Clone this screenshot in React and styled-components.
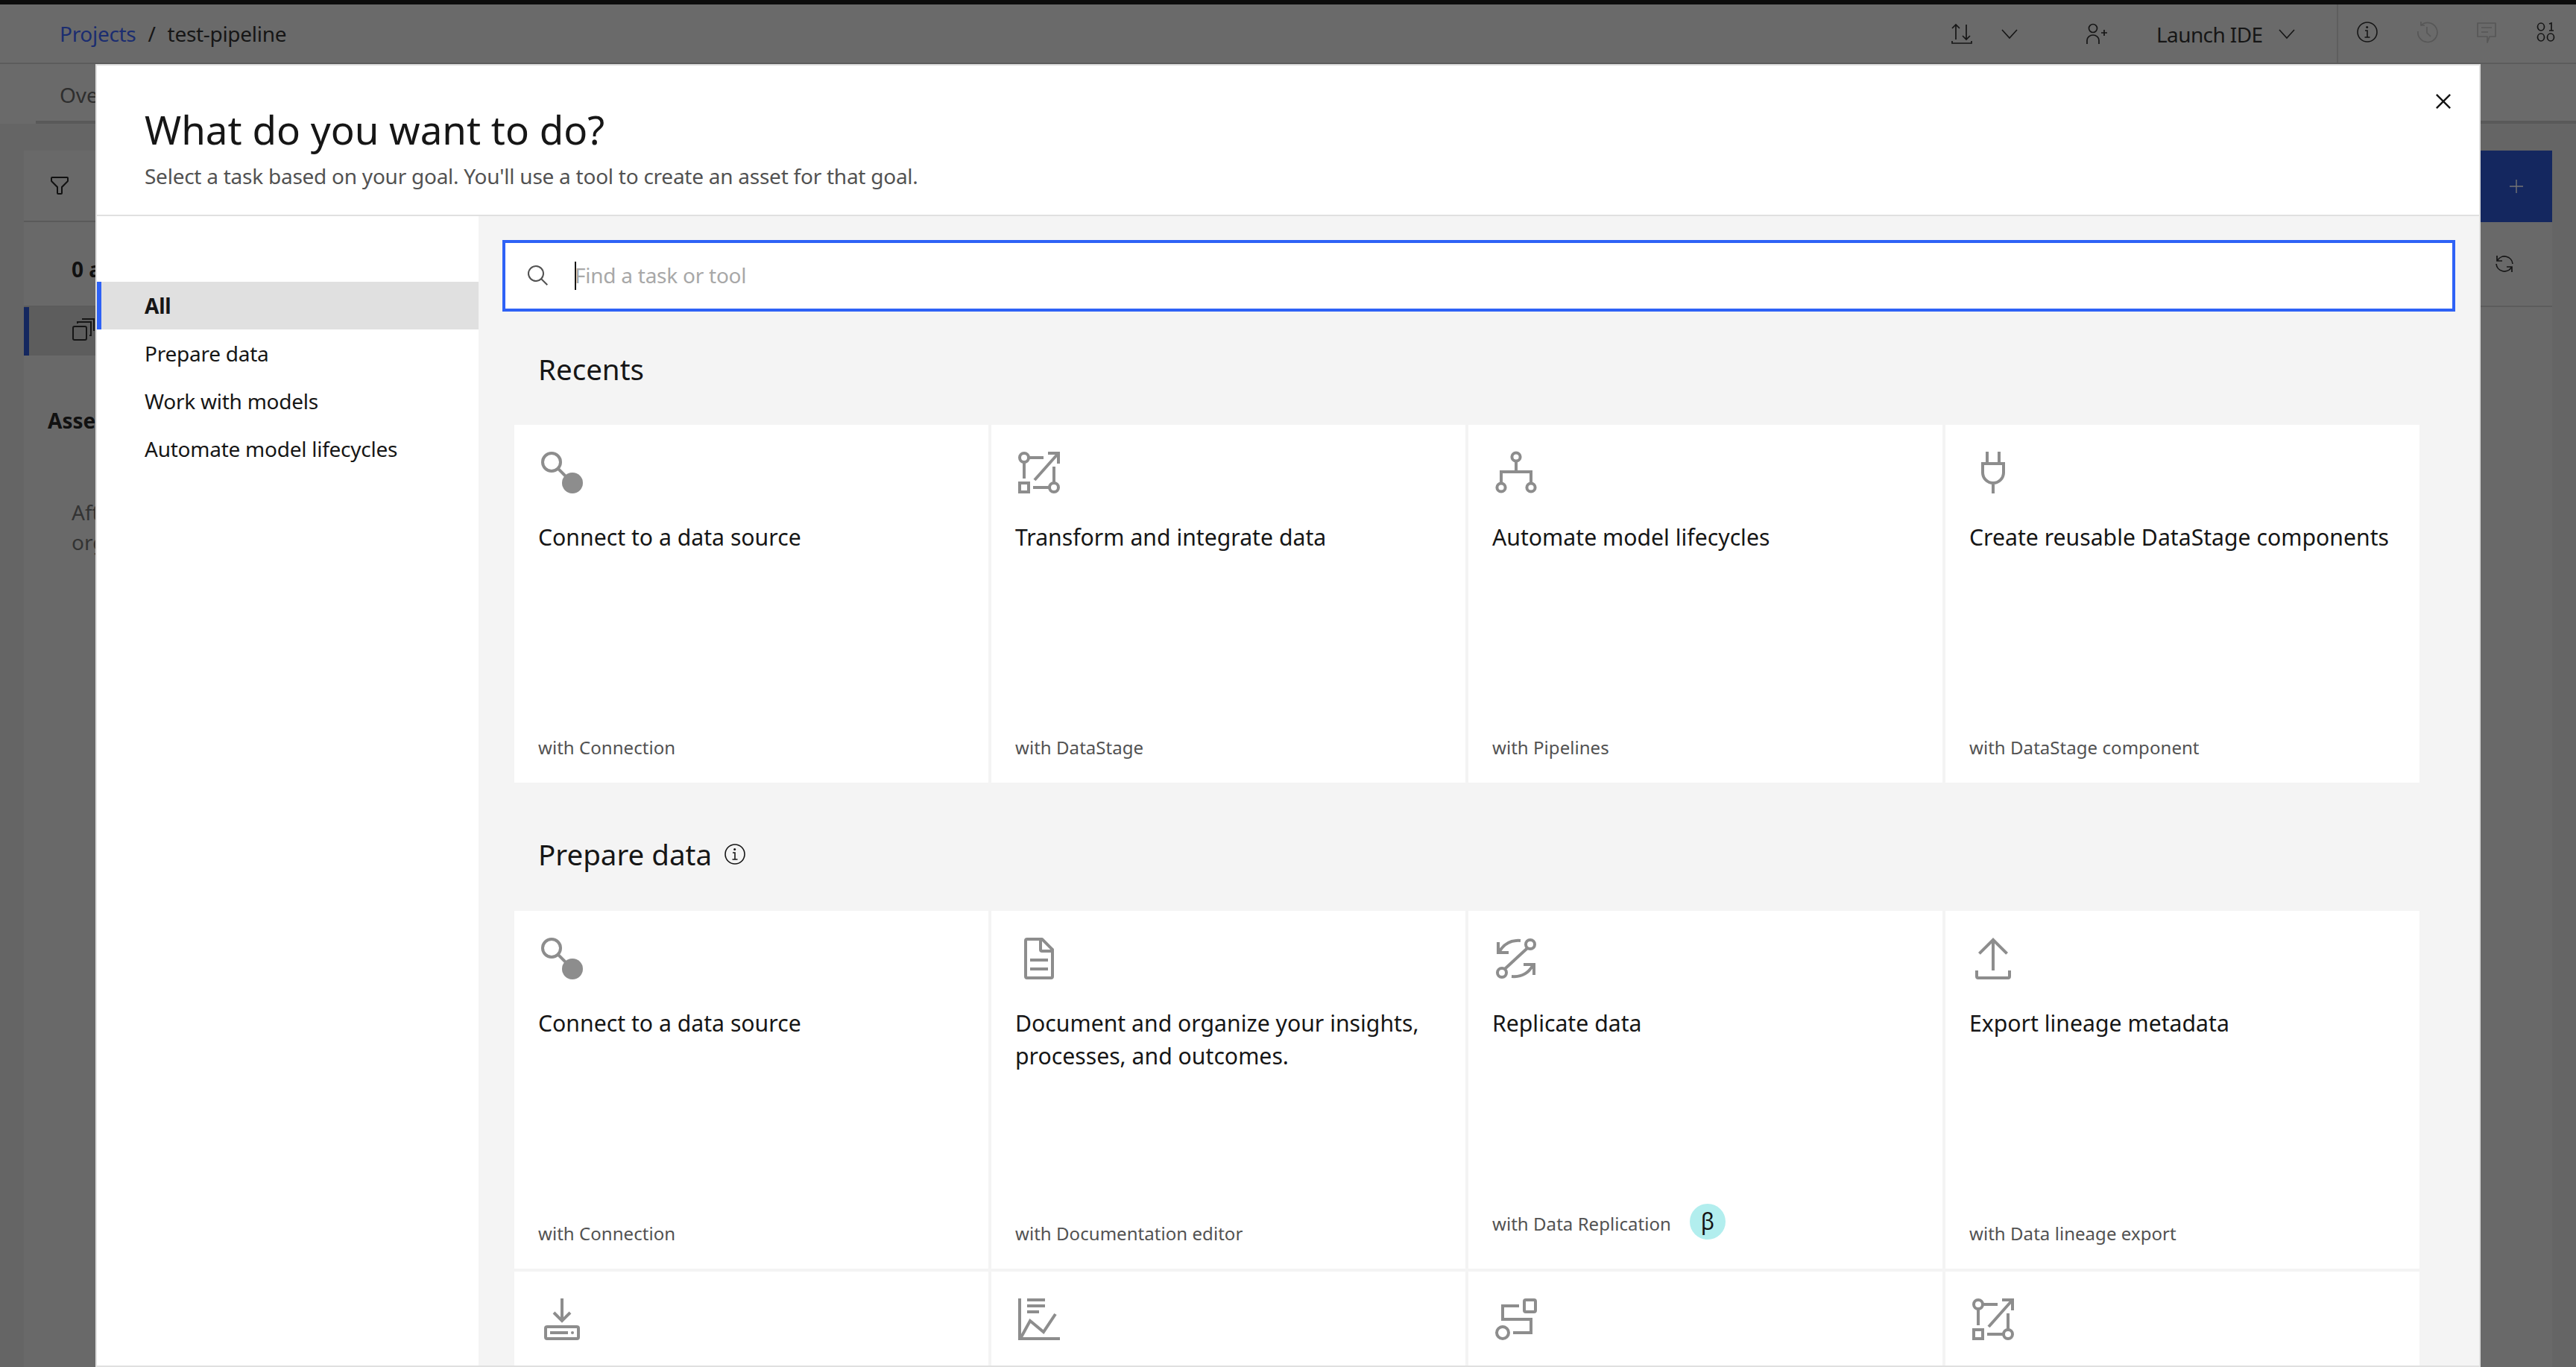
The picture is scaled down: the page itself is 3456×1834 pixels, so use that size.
import React from "react";
import styled, { createGlobalStyle } from "styled-components";

const FONT = `"Noto Sans", "Open Sans", sans-serif`;

const Global = createGlobalStyle`
  html, body { margin: 0; padding: 0; background: #666666; }
  body { font-family: ${FONT}; }
  * { box-sizing: border-box; }
`;

const Page = styled.div`
  position: relative;
  width: 3456px;
  height: 1834px;
  overflow: hidden;
  background: #656565;
  font-family: ${FONT};
`;
const TopStrip = styled.div`height: 6px; background: #0c0c0c;`;
const AppHeader = styled.header`
  display: flex;
  align-items: center;
  height: 80px;
  padding-left: 80px;
  background: #6a6a6a;
  border-bottom: 2px solid #5c5c5c;
`;
const Crumb = styled.span`
  font-size: 28px;
  letter-spacing: ${p => p.$sp || "-0.3px"};
  color: ${p => p.$color || "#161616"};
  margin-right: ${p => p.$mr || 0}px;
`;
const HeaderRight = styled.div`
  margin-left: auto;
  display: flex;
  align-items: center;
  height: 100%;
  padding-right: 25px;
`;
const Slot = styled.div`
  display: flex;
  margin-left: ${p => p.$ml || 0}px;
  margin-top: ${p => p.$mt || 0}px;
`;
const LaunchLabel = styled.span`
  width: 142px;
  margin-left: 64px;
  margin-top: 2px;
  white-space: nowrap;
  font-size: 28px;
  letter-spacing: -0.6px;
  color: #161616;
`;
const VLine = styled.div`
  width: 2px;
  height: 100%;
  margin-left: 51px;
  background: #5e5e5e;
`;
const TabBar = styled.div`
  height: 80px;
  padding-left: 48px;
  background: #6a6a6a;
`;
const Tab = styled.div`
  height: 80px;
  padding: 22px 0 0 32px;
  border-bottom: 4px solid #595959;
  font-size: 28px;
  color: #2e2e2e;
`;
const Panel = styled.section`
  margin: 36px 32px 0;
  height: 1632px;
  background: #696969;
`;
const Toolbar = styled.div`
  display: flex;
  justify-content: space-between;
  height: 96px;
  border-bottom: 2px solid #5a5a5a;
`;
const FilterBox = styled.div`
  display: flex;
  align-items: center;
  padding-left: 32px;
`;
const PrimaryButton = styled.button`
  display: flex;
  align-items: center;
  justify-content: center;
  width: 96px;
  height: 96px;
  padding: 0;
  border: 0;
  background: #14275f;
`;
const CountRow = styled.div`
  display: flex;
  justify-content: space-between;
  align-items: center;
  height: 114px;
  padding: 0 48px 0 64px;
  border-bottom: 2px solid #5c5c5c;
  font-size: 28px;
  font-weight: 700;
  color: #111;
`;
const CountLabel = styled.span`margin-top: 14px;`;
const AssetRow = styled.div`
  display: flex;
  align-items: center;
  width: 300px;
  height: 65px;
  padding: 0 0 6px 57px;
  background: #5d5d5d;
  border-left: 7px solid #14275f;
`;
const AssetHeading = styled.h3`
  margin: 63px 0 0 32px;
  font-size: 28px;
  line-height: 48px;
  font-weight: 700;
  color: #111;
`;
const AssetText = styled.p`
  margin: 79px 0 0 64px;
  font-size: 28px;
  line-height: 40px;
  color: #333;
`;

const Modal = styled.div`
  position: absolute;
  left: 128px;
  top: 86px;
  width: 3200px;
  height: 1748px;
  display: flex;
  flex-direction: column;
  overflow: hidden;
  background: #fff;
  border: 2px solid #e0e0e0;
`;
const ModalHeader = styled.div`
  flex: none;
  display: flex;
  justify-content: space-between;
  height: 202px;
  padding: 49px 28px 0 64px;
  border-bottom: 2px solid #e0e0e0;
`;
const Title = styled.h1`
  margin: 0;
  font-size: 52.9px;
  line-height: 72px;
  font-weight: 400;
  color: #161616;
  letter-spacing: 0;
`;
const Subtitle = styled.p`
  margin: 7px 0 0;
  font-size: 28px;
  line-height: 40px;
  color: #525252;
  letter-spacing: -0.25px;
`;
const CloseButton = styled.button`
  display: flex;
  align-self: flex-start;
  margin-top: -21px;
  padding: 0;
  border: 0;
  background: none;
`;
const ModalBody = styled.div`
  flex: 1;
  display: flex;
  min-height: 0;
`;
const Sidebar = styled.nav`
  flex: none;
  width: 512px;
  padding-top: 88px;
  background: #fff;
`;
const NavItem = styled.div`
  display: flex;
  align-items: center;
  height: 64px;
  padding-left: ${p => (p.$active ? 58 : 64)}px;
  font-size: 28px;
  letter-spacing: -0.25px;
  color: #161616;
  font-weight: ${p => (p.$active ? 700 : 400)};
  background: ${p => (p.$active ? "#e0e0e0" : "transparent")};
  border-left: ${p => (p.$active ? "6px solid #2e62f6" : "0")};
`;
const Content = styled.main`
  flex: 1;
  min-width: 0;
  padding: 32px 32px 0 32px;
  background: #f4f4f4;
`;
const SearchField = styled.div`
  display: flex;
  align-items: center;
  height: 96px;
  padding-left: 28px;
  background: #fff;
  border: 4px solid #2e62f6;
`;
const Caret = styled.span`
  flex: none;
  width: 2px;
  height: 38px;
  margin: 0 -2px 0 33px;
  background: #161616;
`;
const SearchInput = styled.input`
  flex: 1;
  padding: 0 0 2px;
  border: 0;
  outline: 0;
  background: none;
  font-family: ${FONT};
  font-size: 28px;
  letter-spacing: -0.25px;
  color: #161616;
  &::placeholder { color: #a8a8a8; opacity: 1; }
`;
const SectionHeading = styled.h2`
  display: flex;
  align-items: center;
  gap: 15px;
  margin: ${p => p.$top}px 0 ${p => p.$bottom}px 48px;
  font-size: 38.5px;
  line-height: 56px;
  font-weight: 400;
  color: #161616;
`;
const CardGrid = styled.div`
  display: grid;
  grid-template-columns: repeat(4, 636px);
  grid-auto-rows: 480px;
  gap: 4px;
  margin-left: 16px;
`;
const CardBox = styled.article`
  display: flex;
  flex-direction: column;
  padding: 32px 32px 31px;
  background: #fff;
`;
const CardTitle = styled.h3`
  margin: 33px 0 0;
  font-size: 30.2px;
  line-height: 44px;
  font-weight: 400;
  color: #161616;
`;
const CardMeta = styled.div`
  display: flex;
  align-items: center;
  gap: 25px;
  margin-top: auto;
  margin-bottom: ${p => (p.$beta ? 8 : 0)}px;
  font-size: 24px;
  line-height: 32px;
  color: #525252;
  letter-spacing: 0.05px;
`;
const BetaBadge = styled.span`
  display: flex;
  align-items: center;
  justify-content: center;
  width: 48px;
  height: 48px;
  margin-top: -6px;
  border-radius: 50%;
  background: #b2eeee;
  color: #161616;
  font-size: 30px;
  line-height: 1;
`;

const Svg = styled.svg.attrs({ viewBox: "0 0 32 32", xmlns: "http://www.w3.org/2000/svg" })`
  display: block;
  flex: none;
  width: ${p => p.$size || 32}px;
  height: ${p => p.$size || 32}px;
  fill: none;
  stroke: ${p => p.$color || "#161616"};
  stroke-width: ${p => p.$sw || 2};
`;
const GIcon = ({ children }) => <Svg $size={64} $color="#8d8d8d">{children}</Svg>;

const ConnectIcon = () => (
  <GIcon>
    <circle cx="9" cy="9" r="6" />
    <path d="M13.2 13.2 L19 19" />
    <circle cx="23" cy="23" r="7" fill="#8d8d8d" stroke="none" />
  </GIcon>
);
const TransformIcon = () => (
  <GIcon>
    <circle cx="6" cy="6" r="3" />
    <path d="M9 6h10M6 9v11" />
    <path d="M22 3h7v7M29 3 L13 21" />
    <rect x="3" y="23" width="6" height="6" />
    <circle cx="26" cy="26" r="3" />
    <path d="M12 26h11M26 23V12" />
  </GIcon>
);
const TreeIcon = () => (
  <GIcon>
    <circle cx="16" cy="5.5" r="2.8" />
    <path d="M16 8.3V15.5M6 23.2V15.5H26V23.2" />
    <circle cx="6" cy="26" r="2.8" />
    <circle cx="26" cy="26" r="2.8" />
  </GIcon>
);
const PlugIcon = () => (
  <GIcon>
    <path d="M12 2v8M20 2v8M9 10H23V16a7 7 0 0 1-14 0ZM16 23V30" />
  </GIcon>
);
const DocumentIcon = () => (
  <GIcon>
    <path fill="#8d8d8d" stroke="none" d="M25.7,9.3l-7-7A.908.908,0,0,0,18,2H8A2.006,2.006,0,0,0,6,4V28a2.006,2.006,0,0,0,2,2H24a2.006,2.006,0,0,0,2-2V10A.908.908,0,0,0,25.7,9.3ZM18,4.4,23.6,10H18ZM24,28H8V4h8v6a2.006,2.006,0,0,0,2,2h6Z" />
    <path fill="#8d8d8d" stroke="none" d="M10 22H22V24H10z M10 16H22V18H10z" />
  </GIcon>
);
const ReplicateIcon = () => (
  <GIcon>
    <circle cx="25.5" cy="6.5" r="3" />
    <circle cx="6.5" cy="25.5" r="3" />
    <path d="M23.6 9 L8.4 23" />
    <path d="M4 5v7h7M5 11C8 6 13 3.5 19 4" />
    <path d="M21 20h7v7M27 21C24 26 19 28.5 13 28" />
  </GIcon>
);
const ExportIcon = () => (
  <GIcon>
    <path fill="#8d8d8d" stroke="none" d="M26 24v4H6v-4H4v4a2 2 0 0 0 2 2h20a2 2 0 0 0 2-2v-4z" />
    <path fill="#8d8d8d" stroke="none" d="M6 12l1.41 1.41L15 5.83V24h2V5.83l7.59 7.58L26 12 16 2z" />
  </GIcon>
);
const DownloadBoxIcon = () => (
  <GIcon>
    <path d="M16 2V17M10.5 11.5 16 17 21.5 11.5" />
    <rect x="5" y="21" width="22" height="8" rx="1" />
    <path d="M8 25H20" />
    <circle cx="23" cy="25" r="1" fill="#8d8d8d" stroke="none" />
  </GIcon>
);
const ChartIcon = () => (
  <GIcon>
    <path d="M3 2V29H30" />
    <path d="M8 3H20M8 7H20M8 11H16" />
    <path d="M4 28 L10 17 L19 24.5 L27 12.5" />
  </GIcon>
);
const FlowIcon = () => (
  <GIcon>
    <rect x="21.5" y="3" width="7.5" height="8" rx="1" />
    <circle cx="7" cy="25" r="4" />
    <path d="M18 7H7V16H26V25H14" />
  </GIcon>
);

const SearchIcon = () => (
  <Svg>
    <path fill="#525252" stroke="none" d="M29,27.5859l-7.5521-7.5521a11.0177,11.0177,0,1,0-1.4141,1.4141L27.5859,29ZM4,13a9,9,0,1,1,9,9A9.01,9.01,0,0,1,4,13Z" />
  </Svg>
);
const CloseIcon = () => (
  <Svg $size={40}>
    <path fill="#161616" stroke="none" d="M24 9.4L22.6 8 16 14.6 9.4 8 8 9.4 14.6 16 8 22.6 9.4 24 16 17.4 22.6 24 24 22.6 17.4 16 24 9.4z" />
  </Svg>
);
const InfoIcon = ({ color }) => (
  <Svg $color={color} $sw={1.6}>
    <circle cx="16" cy="16" r="13" />
    <path d="M12.5 23H19.5M16 23V14H13" />
    <circle cx="15.7" cy="9.5" r="1.5" fill={color || "#161616"} stroke="none" />
  </Svg>
);
const ChevronIcon = () => (
  <Svg $sw={1.6}><path d="M6 11 16 22 26 11" /></Svg>
);
const UpDownIcon = () => (
  <Svg $sw={1.7}>
    <path d="M8 24V4M3 9 8 4 13 9" />
    <path d="M22 4V24M17 19 22 24 27 19" />
    <path d="M3 26V29H29V26" />
  </Svg>
);
const UserAddIcon = () => (
  <Svg $sw={1.7}>
    <circle cx="11" cy="9" r="5.5" />
    <path d="M3 30V25a8 7 0 0 1 16 0V30" />
    <path d="M22 15H30M26 11V19" />
  </Svg>
);
const HistoryIcon = () => (
  <Svg $color="#575757" $sw={1.7}>
    <path d="M8 7A13 13 0 1 1 4 15" />
    <path d="M8 2V7H13M16 9V17L21 22" />
  </Svg>
);
const CommentIcon = () => (
  <Svg $color="#575757" $sw={1.7}>
    <path d="M4 4H28V22H20L17 30V22H4Z" strokeLinejoin="round" />
    <path d="M9 10H23M9 16H18" />
  </Svg>
);
const BinaryIcon = () => (
  <Svg $sw={1.7}>
    <ellipse cx="10" cy="9" rx="4.5" ry="5" />
    <path d="M21 5 24 4V14M21 14H27" />
    <ellipse cx="10" cy="23" rx="4.5" ry="5" />
    <ellipse cx="23" cy="23" rx="4.5" ry="5" />
  </Svg>
);
const FilterIcon = () => (
  <Svg>
    <path fill="#111" stroke="none" d="M18,28H14a2,2,0,0,1-2-2V18.41L4.59,11A2,2,0,0,1,4,9.59V6A2,2,0,0,1,6,4H26a2,2,0,0,1,2,2V9.59A2,2,0,0,1,27.41,11L20,18.41V26A2,2,0,0,1,18,28ZM6,6V9.59l8,8V26h4V17.59l8-8V6Z" />
  </Svg>
);
const PlusIcon = () => (
  <Svg $color="#757575" $sw={1.4}><path d="M16 7V25M7 16H25" /></Svg>
);
const RefreshIcon = () => (
  <Svg $sw={1.7}>
    <path d="M6 5V12H13M6.5 11.5A11 11 0 0 1 27 16" />
    <path d="M26 27V20H19M25.5 20.5A11 11 0 0 1 5 16" />
  </Svg>
);
const CopyIcon = () => (
  <Svg $size={32} $sw={2}>
    <rect x="2" y="12" width="18" height="18" rx="2" />
    <path d="M8 8V6H26V24H24M14 2H30V18" />
  </Svg>
);

const Card = ({ icon, title, meta, beta }) => (
  <CardBox>
    {icon}
    {title && <CardTitle>{title}</CardTitle>}
    {meta && (
      <CardMeta $beta={beta}>
        {meta}
        {beta && <BetaBadge>β</BetaBadge>}
      </CardMeta>
    )}
  </CardBox>
);

const recents = [
  { icon: <ConnectIcon />, title: "Connect to a data source", meta: "with Connection" },
  { icon: <TransformIcon />, title: "Transform and integrate data", meta: "with DataStage" },
  { icon: <TreeIcon />, title: "Automate model lifecycles", meta: "with Pipelines" },
  { icon: <PlugIcon />, title: "Create reusable DataStage components", meta: "with DataStage component" },
];
const prepare = [
  { icon: <ConnectIcon />, title: "Connect to a data source", meta: "with Connection" },
  { icon: <DocumentIcon />, title: "Document and organize your insights, processes, and outcomes.", meta: "with Documentation editor" },
  { icon: <ReplicateIcon />, title: "Replicate data", meta: "with Data Replication", beta: true },
  { icon: <ExportIcon />, title: "Export lineage metadata", meta: "with Data lineage export" },
  { icon: <DownloadBoxIcon /> },
  { icon: <ChartIcon /> },
  { icon: <FlowIcon /> },
  { icon: <TransformIcon /> },
];
const navItems = ["All", "Prepare data", "Work with models", "Automate model lifecycles"];

export default function App() {
  return (
    <Page>
      <Global />
      <TopStrip />
      <AppHeader>
        <Crumb $color="#1b2d70" $mr={16}>Projects</Crumb>
        <Crumb $mr={16}>/</Crumb>
        <Crumb>test-pipeline</Crumb>
        <HeaderRight>
          <Slot><UpDownIcon /></Slot>
          <Slot $ml={32}><ChevronIcon /></Slot>
          <Slot $ml={85}><UserAddIcon /></Slot>
          <LaunchLabel>Launch IDE</LaunchLabel>
          <Slot $ml={17}><ChevronIcon /></Slot>
          <VLine />
          <Slot $ml={23} $mt={-4}><InfoIcon /></Slot>
          <Slot $ml={48} $mt={-4}><HistoryIcon /></Slot>
          <Slot $ml={48} $mt={-4}><CommentIcon /></Slot>
          <Slot $ml={47} $mt={-4}><BinaryIcon /></Slot>
        </HeaderRight>
      </AppHeader>
      <TabBar><Tab>Overview</Tab></TabBar>
      <Panel>
        <Toolbar>
          <FilterBox><FilterIcon /></FilterBox>
          <PrimaryButton><PlusIcon /></PrimaryButton>
        </Toolbar>
        <CountRow>
          <CountLabel>0 assets</CountLabel>
          <RefreshIcon />
        </CountRow>
        <AssetRow><CopyIcon /></AssetRow>
        <AssetHeading>Assets</AssetHeading>
        <AssetText>After you add assets, you can<br />organize them</AssetText>
      </Panel>

      <Modal>
        <ModalHeader>
          <div>
            <Title>What do you want to do?</Title>
            <Subtitle>Select a task based on your goal. You'll use a tool to create an asset for that goal.</Subtitle>
          </div>
          <CloseButton><CloseIcon /></CloseButton>
        </ModalHeader>
        <ModalBody>
          <Sidebar>
            {navItems.map((n, i) => <NavItem key={n} $active={i === 0}>{n}</NavItem>)}
          </Sidebar>
          <Content>
            <SearchField>
              <SearchIcon />
              <Caret />
              <SearchInput readOnly placeholder="Find a task or tool" />
            </SearchField>
            <SectionHeading $top={49} $bottom={47}>Recents</SectionHeading>
            <CardGrid>
              {recents.map((c, i) => <Card key={i} {...c} />)}
            </CardGrid>
            <SectionHeading $top={68} $bottom={48}>
              Prepare data
              <InfoIcon />
            </SectionHeading>
            <CardGrid>
              {prepare.map((c, i) => <Card key={i} {...c} />)}
            </CardGrid>
          </Content>
        </ModalBody>
      </Modal>
    </Page>
  );
}
